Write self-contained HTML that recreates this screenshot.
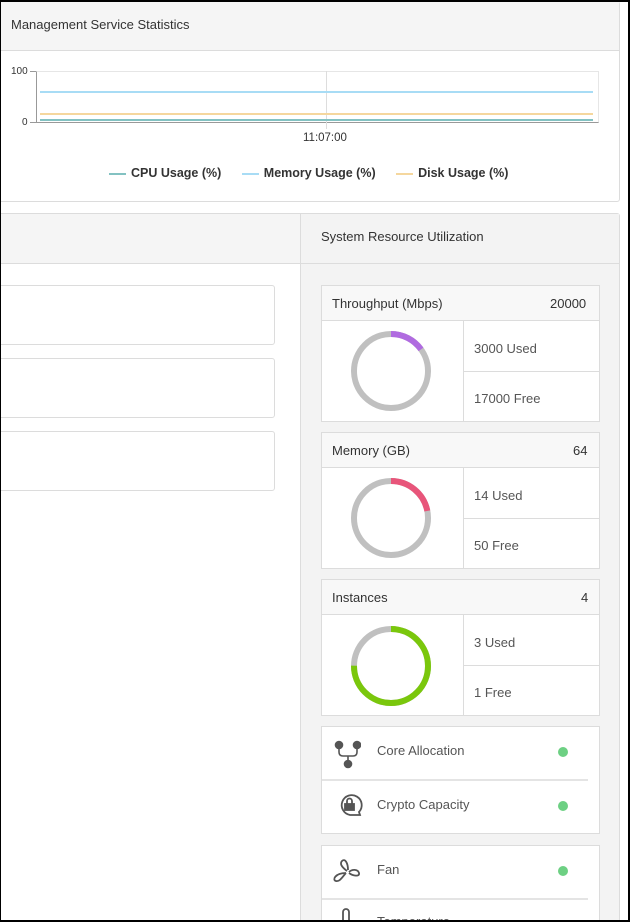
<!DOCTYPE html>
<html style="overflow:hidden;width:630px;height:922px"><head><style>
*{box-sizing:border-box;margin:0;padding:0}
body{width:630px;height:922px;background:#fff;font-family:"Liberation Sans",sans-serif;position:relative;overflow:hidden;color:#333}
.a{position:absolute}
.bd{border:1px solid #dcdcdc}
.t{font-size:13px;color:#333}
.ct{font-size:13px;color:#555}
.dot{position:absolute;width:10px;height:10px;border-radius:50%;background:#6dd083}
</style></head><body>
<!-- top card -->
<div class="a bd" style="left:-2px;top:1px;width:622px;height:201px;border-radius:3px;background:#fff"></div>
<div class="a" style="left:0;top:2px;width:619px;height:49px;background:#f5f5f5;border-bottom:1px solid #dcdcdc"></div>
<div class="a t" style="left:11px;top:17px">Management Service Statistics</div>
<div class="a" style="left:11px;top:66px;font-size:10px;color:#333">100</div>
<div class="a" style="left:22px;top:117px;font-size:10px;color:#333">0</div>
<div class="a" style="left:36px;top:71px;width:563px;height:52px;border:1px solid #e6e6e6;border-left:1px solid #999;border-bottom:1px solid #999"></div>
<div class="a" style="left:30px;top:71px;width:6px;height:1px;background:#999"></div>
<div class="a" style="left:30px;top:122px;width:6px;height:1px;background:#999"></div>
<div class="a" style="left:326px;top:71px;width:1px;height:58px;background:#ddd"></div>
<div class="a" style="left:40px;top:91px;width:553px;height:2px;background:#a8dcf5"></div>
<div class="a" style="left:40px;top:113px;width:553px;height:2px;background:#f5d79e"></div>
<div class="a" style="left:40px;top:119px;width:553px;height:2px;background:#83c2c2"></div>
<div class="a" style="left:303px;top:132px;font-size:11.5px">11:07:00</div>
<div class="a" style="left:109px;top:166px;font-size:12.5px;font-weight:bold;color:#333;white-space:nowrap">
<span style="display:inline-block;width:17px;height:2px;background:#83c2c2;vertical-align:middle;margin:0 5px 0 0"></span>CPU Usage (%)
<span style="display:inline-block;width:17px;height:2px;background:#a8dcf5;vertical-align:middle;margin:0 5px 0 17px"></span>Memory Usage (%)
<span style="display:inline-block;width:17px;height:2px;background:#f5d79e;vertical-align:middle;margin:0 5px 0 17px"></span>Disk Usage (%)</div>
<!-- second card -->
<div class="a bd" style="left:-2px;top:213px;width:622px;height:720px;border-radius:3px;background:#fff"></div>
<div class="a" style="left:0;top:214px;width:300px;height:50px;background:#f5f5f5;border-bottom:1px solid #dcdcdc"></div>
<div class="a" style="left:300px;top:214px;width:319px;height:720px;background:#f3f3f3;border-left:1px solid #dcdcdc"></div>
<div class="a" style="left:300px;top:214px;width:319px;height:50px;border-bottom:1px solid #dcdcdc"></div>
<div class="a t" style="left:321px;top:229px">System Resource Utilization</div>
<div class="a bd" style="left:-5px;top:285px;width:280px;height:60px;border-radius:3px"></div>
<div class="a bd" style="left:-5px;top:358px;width:280px;height:60px;border-radius:3px"></div>
<div class="a bd" style="left:-5px;top:431px;width:280px;height:60px;border-radius:3px"></div>

<div class="a bd" style="left:321px;top:285px;width:279px;height:137px;background:#fff"></div>
<div class="a" style="left:322px;top:286px;width:277px;height:35px;background:#f8f8f8;border-bottom:1px solid #dcdcdc"></div>
<div class="a t" style="left:332px;top:296px">Throughput (Mbps)</div><div class="a t" style="left:550px;top:296px">20000</div>
<div class="a" style="left:463px;top:321px;width:1px;height:100px;background:#dcdcdc"></div>
<div class="a" style="left:463px;top:371px;width:136px;height:1px;background:#dcdcdc"></div>
<div class="a ct" style="left:474px;top:341px">3000 Used</div><div class="a ct" style="left:474px;top:391px">17000 Free</div>
<svg class="a" style="left:351px;top:331px" width="80" height="80"><circle cx="40" cy="40" r="37" fill="none" stroke="#c0c0c0" stroke-width="6"/><circle cx="40" cy="40" r="37" fill="none" stroke="#b06be0" stroke-width="6" stroke-dasharray="34.9 300" transform="rotate(-90 40 40)"/></svg>

<div class="a bd" style="left:321px;top:432px;width:279px;height:137px;background:#fff"></div>
<div class="a" style="left:322px;top:433px;width:277px;height:35px;background:#f8f8f8;border-bottom:1px solid #dcdcdc"></div>
<div class="a t" style="left:332px;top:443px">Memory (GB)</div><div class="a t" style="left:573px;top:443px">64</div>
<div class="a" style="left:463px;top:468px;width:1px;height:100px;background:#dcdcdc"></div>
<div class="a" style="left:463px;top:518px;width:136px;height:1px;background:#dcdcdc"></div>
<div class="a ct" style="left:474px;top:488px">14 Used</div><div class="a ct" style="left:474px;top:538px">50 Free</div>
<svg class="a" style="left:351px;top:478px" width="80" height="80"><circle cx="40" cy="40" r="37" fill="none" stroke="#c0c0c0" stroke-width="6"/><circle cx="40" cy="40" r="37" fill="none" stroke="#e8557a" stroke-width="6" stroke-dasharray="50.9 300" transform="rotate(-90 40 40)"/></svg>

<div class="a bd" style="left:321px;top:579px;width:279px;height:137px;background:#fff"></div>
<div class="a" style="left:322px;top:580px;width:277px;height:35px;background:#f8f8f8;border-bottom:1px solid #dcdcdc"></div>
<div class="a t" style="left:332px;top:590px">Instances</div><div class="a t" style="left:581px;top:590px">4</div>
<div class="a" style="left:463px;top:615px;width:1px;height:100px;background:#dcdcdc"></div>
<div class="a" style="left:463px;top:665px;width:136px;height:1px;background:#dcdcdc"></div>
<div class="a ct" style="left:474px;top:635px">3 Used</div><div class="a ct" style="left:474px;top:685px">1 Free</div>
<svg class="a" style="left:351px;top:626px" width="80" height="80"><circle cx="40" cy="40" r="37" fill="none" stroke="#c0c0c0" stroke-width="6"/><circle cx="40" cy="40" r="37" fill="none" stroke="#7ac70c" stroke-width="6" stroke-dasharray="174.4 300" transform="rotate(-90 40 40)"/></svg>

<div class="a bd" style="left:321px;top:726px;width:279px;height:108px;background:#fff"></div>
<div class="a" style="left:322px;top:779px;width:266px;height:2px;background:#e4e4e4"></div>
<svg class="a" style="left:333px;top:740px" width="28" height="30" fill="none" stroke="#555" stroke-width="1.6"><circle cx="6" cy="5" r="3.5" fill="#555"/><circle cx="24" cy="5" r="3.5" fill="#555"/><circle cx="15" cy="24" r="3.5" fill="#555"/><path d="M6 8v4q0 4 4 4h10q4 0 4-4V8M15 16v5"/></svg>
<div class="a ct" style="left:377px;top:743px">Core Allocation</div><div class="dot" style="left:558px;top:747px"></div>
<svg class="a" style="left:337px;top:793px" width="28" height="26" fill="none" stroke="#555" stroke-width="1.8"><path d="M22 19A10 10 0 1 0 13 22h10z"/><rect x="8" y="11" width="9" height="6" fill="#555"/><path d="M10 11V8a2.5 2.5 0 0 1 5 0v3"/></svg>
<div class="a ct" style="left:377px;top:797px">Crypto Capacity</div><div class="dot" style="left:558px;top:801px"></div>

<div class="a bd" style="left:321px;top:845px;width:279px;height:100px;background:#fff"></div>
<div class="a" style="left:322px;top:898px;width:266px;height:2px;background:#e4e4e4"></div>
<svg class="a" style="left:333px;top:858px" width="30" height="28" fill="none" stroke="#555" stroke-width="1.8"><path d="M14 13C10 10 6 6 9 3s6 2 6 9M16 14c3-3 9-3 10 1s-6 3-10 0M13 15c-3 3-6 9-10 8s-1-8 10-8"/></svg>
<div class="a ct" style="left:377px;top:862px">Fan</div><div class="dot" style="left:558px;top:866px"></div>
<svg class="a" style="left:340px;top:908px" width="12" height="14" fill="none" stroke="#555" stroke-width="1.8"><path d="M3 14V4a3 3 0 0 1 6 0v10"/></svg>
<div class="a ct" style="left:377px;top:914px">Temperature</div>
<div class="a" style="left:0;top:0;width:630px;height:922px;border:2px solid #000;border-left-width:1px;z-index:10;pointer-events:none"></div>
</body></html>
